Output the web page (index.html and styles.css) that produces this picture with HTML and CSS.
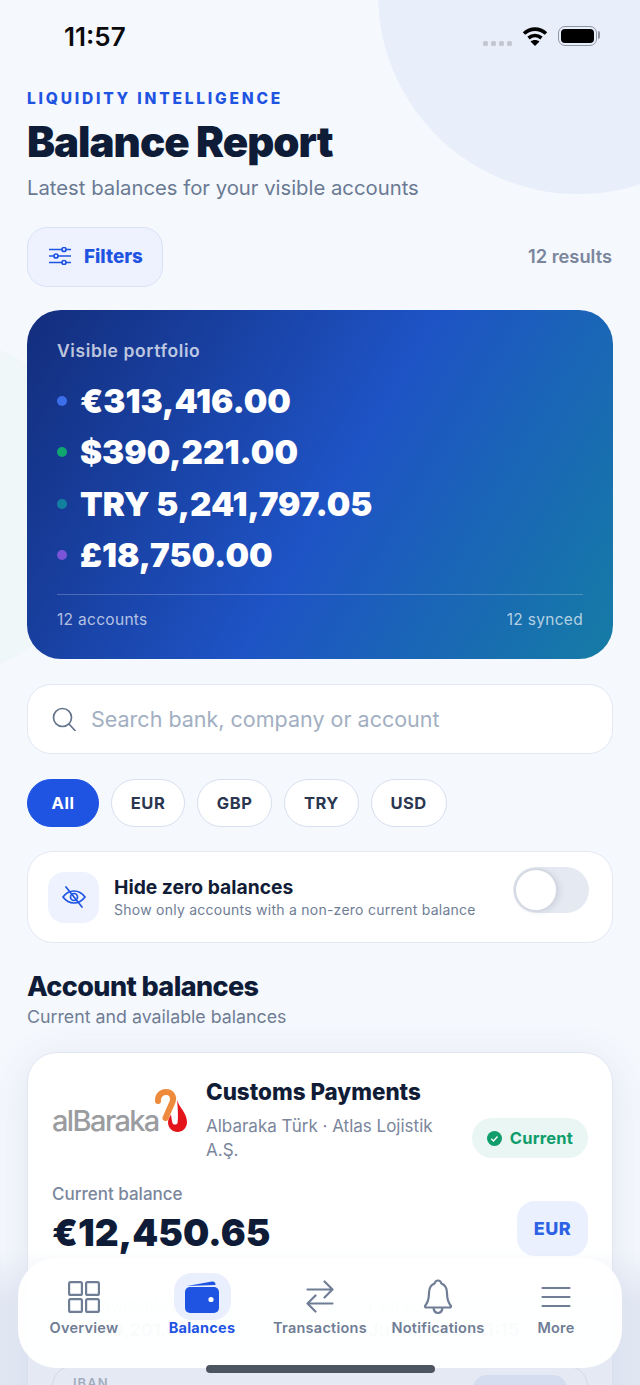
FILE: index.html
```html
<!DOCTYPE html>
<html lang="en">
<head>
<meta charset="UTF-8" />
<meta name="viewport" content="width=device-width, initial-scale=1" />
<title>Balance Report</title>
<link rel="stylesheet" href="styles.css">
</head>
<body>
  <div class="screen">
    <!-- Background shapes -->
    <div class="blob-blue"></div>
    <div class="blob-green"></div>

    <!-- Status bar -->
    <div class="status">
      <span class="time">11:57</span>
      <div class="status-icons">
        <div class="signal"><i></i><i></i><i></i><i></i></div>
        <svg class="wifi" width="26" height="20" viewBox="0 0 26 20" fill="none" stroke="#000" stroke-width="3.600">
          <path d="M2 7.500c6.500-5.800 15.500-5.800 22 0" />
          <path d="M6.500 12c4-3.300 9-3.300 13 0" />
          <path d="M13 20l-4.500-4.500c2.500-2 6.500-2 9 0z" fill="#000" stroke="none" />
        </svg>
        <div class="battery"><div class="battery-fill"></div></div>
      </div>
    </div>

    <div class="content">
      <div class="eyebrow">LIQUIDITY INTELLIGENCE</div>
      <h1>Balance Report</h1>
      <p class="lead">Latest balances for your visible accounts</p>

      <div class="toolbar">
        <button class="filters">
          <svg width="22" height="18" viewBox="0 0 22 18" fill="none" stroke="#1f54e3" stroke-width="1.700">
            <path d="M0 2.500h13M17 2.500h5M0 9h5M9 9h13M0 15.500h13M17 15.500h5" />
            <circle cx="15" cy="2.500" r="2" />
            <circle cx="7" cy="9" r="2" />
            <circle cx="15" cy="15.500" r="2" />
          </svg>
          Filters
        </button>
        <span class="results">12 results</span>
      </div>

      <!-- Portfolio card -->
      <div class="hero">
        <div class="hero-label">Visible portfolio</div>
        <div class="hero-rows">
          <div class="hero-row"><span class="dot dot-eur"></span>€313,416.00</div>
          <div class="hero-row"><span class="dot dot-usd"></span>$390,221.00</div>
          <div class="hero-row"><span class="dot dot-try"></span>TRY 5,241,797.05</div>
          <div class="hero-row"><span class="dot dot-gbp"></span>£18,750.00</div>
        </div>
        <div class="hero-foot">
          <span>12 accounts</span>
          <span>12 synced</span>
        </div>
      </div>

      <div class="search">
        <svg width="24" height="24" viewBox="0 0 24 24" fill="none" stroke="#66758c" stroke-width="1.700" stroke-linecap="round">
          <circle cx="10.500" cy="10.500" r="9" />
          <path d="M17 17l6 6.500" />
        </svg>
        <span class="placeholder">Search bank, company or account</span>
      </div>

      <div class="chips">
        <span class="chip chip-on">All</span>
        <span class="chip">EUR</span>
        <span class="chip">GBP</span>
        <span class="chip">TRY</span>
        <span class="chip">USD</span>
      </div>

      <div class="zero-card">
        <div class="zero-icon">
          <svg width="24" height="22" viewBox="0 0 24 22" fill="none" stroke="#1f54e3" stroke-width="1.700" stroke-linecap="round">
            <path d="M1 11C4 7 7.500 5 12 5S20 7 23 11C20 15 16.500 17 12 17S4 15 1 11z" />
            <circle cx="12" cy="11" r="3.500" />
            <path d="M4 1l16 20" />
          </svg>
        </div>
        <div class="zero-text">
          <div class="zero-title">Hide zero balances</div>
          <div class="zero-sub">Show only accounts with a non-zero current balance</div>
        </div>
        <div class="toggle"><div class="knob"></div></div>
      </div>

      <h2>Account balances</h2>
      <p class="section-sub">Current and available balances</p>

      <!-- Account card -->
      <div class="account">
        <div class="account-top">
          <div class="logo">
            <span class="logo-text">alBaraka</span>
            <svg class="logo-mark" width="34" height="44" viewBox="0 0 34 44" fill="none">
              <path d="M4 12C3.500 6 8 3 12 3c5 0 8.500 4 6.500 10L11.500 29" stroke="#ee8a3c" stroke-width="6" stroke-linecap="round" />
              <path d="M23 11c2 7 10 13 10 22 0 6-4.500 10-9.500 10S14 39 14 33.500c0-3 1.500-5.500 3-8 .5 3 .7 6 1.500 8.500 .7 2 4.500 2 5 0 .8-4 .5-15-.5-23z" fill="#e3151a" />
            </svg>
          </div>
          <div class="account-info">
            <div class="account-name">Customs Payments</div>
            <div class="account-bank">Albaraka Türk · Atlas Lojistik A.Ş.</div>
          </div>
          <div class="pill-current">
            <svg width="15" height="15" viewBox="0 0 15 15">
              <circle cx="7.500" cy="7.500" r="7.500" fill="#0f9d6b" />
              <path d="M4.300 7.700l2.200 2.200 4-4.300" fill="none" stroke="#fff" stroke-width="1.400" />
            </svg>
            Current
          </div>
        </div>

        <div class="balance-row">
          <div>
            <div class="balance-label">Current balance</div>
            <div class="balance-value">€12,450.65</div>
          </div>
          <div class="currency">EUR</div>
        </div>

        <div class="stats">
          <div class="stat">
            <div class="stat-icon"></div>
            <div>
              <div class="stat-label">Available balance</div>
              <div class="stat-value">€9,201.65</div>
            </div>
          </div>
          <div class="stat">
            <div class="stat-icon stat-round"></div>
            <div>
              <div class="stat-label">Last update</div>
              <div class="stat-value">Jul 14, 2025 11:15</div>
            </div>
          </div>
        </div>

        <div class="iban">
          <span class="iban-label">IBAN</span>
          <span class="iban-btn"></span>
        </div>
      </div>
    </div>

    <!-- Fade under the tab bar -->
    <div class="scrim"></div>

    <!-- Tab bar -->
    <div class="tabbar">
      <div class="tab">
        <span class="tab-icon">
          <svg width="32" height="32" viewBox="0 0 32 32" fill="none" stroke="#6f7d95" stroke-width="2.200">
            <rect x="1.100" y="1.100" width="12.800" height="12.800" rx="1.500" />
            <rect x="18.100" y="1.100" width="12.800" height="12.800" rx="1.500" />
            <rect x="1.100" y="18.100" width="12.800" height="12.800" rx="1.500" />
            <rect x="18.100" y="18.100" width="12.800" height="12.800" rx="1.500" />
          </svg>
        </span>
        Overview
      </div>
      <div class="tab tab-on">
        <span class="tab-icon tab-icon-on">
          <svg width="34" height="32" viewBox="0 0 34 32">
            <path d="M2 5L27 .5c2-.3 3.500 .8 3.500 3.500z" fill="#1f54e3" />
            <rect x="0" y="6" width="34" height="26" rx="5" fill="#1f54e3" />
            <circle cx="26" cy="18.500" r="2.600" fill="#fff" />
          </svg>
        </span>
        Balances
      </div>
      <div class="tab">
        <span class="tab-icon">
          <svg width="28" height="33" viewBox="0 0 28 33" fill="none" stroke="#6f7d95" stroke-width="2.200" stroke-linecap="round" stroke-linejoin="round">
            <path d="M1.500 9.500h25M18.500 1.500l8 8-8 8" />
            <path d="M26.500 23.500h-25M9.500 15.500l-8 8 8 8" />
          </svg>
        </span>
        Transactions
      </div>
      <div class="tab">
        <span class="tab-icon">
          <svg width="30" height="36" viewBox="0 0 30 36" fill="none" stroke="#6f7d95" stroke-width="2.200" stroke-linejoin="round">
            <path d="M15 1.500c-2 0-3 1.300-3.400 3C7.500 6 6 9.500 6 14c0 6-1.500 10-4 13 0 1 .5 1.500 1.500 1.500h23c1 0 1.500-.5 1.500-1.500-2.500-3-4-7-4-13 0-4.500-1.500-8-5.600-9.500-.4-1.700-1.400-3-3.400-3z" />
            <path d="M10.500 29c.5 3 2.300 5 4.500 5s4-2 4.500-5" />
          </svg>
        </span>
        Notifications
      </div>
      <div class="tab">
        <span class="tab-icon">
          <svg width="30" height="22" viewBox="0 0 30 22" fill="none" stroke="#6f7d95" stroke-width="2.200" stroke-linecap="round">
            <path d="M1.500 2h27M1.500 11h27M1.500 20h27" />
          </svg>
        </span>
        More
      </div>
    </div>

    <div class="home-bar"></div>
  </div>
</body>
</html>
```

FILE: styles.css
```css
* {
  margin: 0;
  padding: 0;
  box-sizing: border-box;
}

html, body {
  height: 100%;
  overflow: hidden;
  font-family: 'Inter', sans-serif;
  color: #111c36;
  background: #f5f8fd;
}

.screen {
  position: relative;
  width: 640px;
  height: 1385px;
  overflow: hidden;
  background: #f5f8fd;
}

.blob-blue {
  position: absolute;
  top: -206px;
  left: 378px;
  width: 400px;
  height: 400px;
  border-radius: 50%;
  background: #e8eefa;
}

.blob-green {
  position: absolute;
  top: 337px;
  left: -235px;
  width: 340px;
  height: 340px;
  border-radius: 50%;
  background: #eff7f9;
}

/* Status bar */
.status {
  position: relative;
  display: flex;
  align-items: center;
  justify-content: space-between;
  height: 72px;
  padding: 0 43px 0 64px;
}

.time {
  font-size: 26px;
  font-weight: 600;
  color: #0b0b0d;
}

.status-icons {
  display: flex;
  align-items: center;
}

.signal {
  display: flex;
  gap: 3px;
  margin: 14px 10px 0 0;
}

.signal i {
  width: 5px;
  height: 5px;
  border-radius: 1.500px;
  background: #c4c8d0;
}

.wifi {
  margin-right: 10px;
}

.battery {
  position: relative;
  width: 39px;
  height: 20px;
  padding: 2px;
  border: 1.500px solid #8f95a1;
  border-radius: 7px;
}

.battery::after {
  content: '';
  position: absolute;
  top: 4px;
  right: -4px;
  width: 2px;
  height: 8px;
  border-radius: 0 2px 2px 0;
  background: #8f95a1;
}

.battery-fill {
  width: 100%;
  height: 100%;
  border-radius: 4px;
  background: #000;
}

.content {
  position: relative;
  margin-top: 16px;
  padding: 0 27px;
}

.eyebrow {
  padding-top: 1px;
  font-size: 15.500px;
  line-height: 19px;
  font-weight: 800;
  letter-spacing: 2.800px;
  color: #1f54e3;
}

h1 {
  margin-top: 10px;
  font-size: 42px;
  line-height: 48px;
  font-weight: 900;
  letter-spacing: -1px;
  color: #0f1c38;
}

.lead {
  margin-top: 9px;
  font-size: 20.300px;
  line-height: 26px;
  color: #6a7a93;
}

.toolbar {
  display: flex;
  align-items: center;
  justify-content: space-between;
  margin-top: 26px;
}

.filters {
  display: flex;
  align-items: center;
  gap: 13px;
  width: 136px;
  height: 60px;
  padding: 0 0 2px 21px;
  font-family: inherit;
  font-size: 18.800px;
  font-weight: 800;
  color: #1f54e3;
  background: #edf2fe;
  border: 1.500px solid #d9e2f6;
  border-radius: 20px;
}

.results {
  padding: 0 1px 2px 0;
  font-size: 18.300px;
  font-weight: 600;
  color: #7a869c;
}

/* Portfolio card */
.hero {
  height: 349px;
  margin-top: 23px;
  padding: 30px;
  color: #fff;
  background: linear-gradient(120deg, #132d7c 0%, #1e53c5 52%, #157ca5 100%);
  border-radius: 34px;
}

.hero-label {
  font-size: 17.500px;
  line-height: 22px;
  font-weight: 600;
  letter-spacing: 0.600px;
  color: rgba(255, 255, 255, 0.72);
}

.hero-rows {
  margin-top: 13px;
}

.hero-row {
  display: flex;
  align-items: center;
  height: 51.500px;
  font-size: 33.200px;
  font-weight: 900;
}

.dot {
  width: 10px;
  height: 10px;
  margin-right: 13px;
  border-radius: 50%;
}

.dot-eur { background: #3b6ee8; }
.dot-usd { background: #10a66f; }
.dot-try { background: #14809f; }
.dot-gbp { background: #7a55d8; }

.hero-foot {
  display: flex;
  justify-content: space-between;
  margin-top: 13px;
  padding-top: 15px;
  font-size: 15.500px;
  line-height: 20px;
  letter-spacing: 0.300px;
  color: rgba(255, 255, 255, 0.68);
  border-top: 1px solid rgba(255, 255, 255, 0.22);
}

.search {
  display: flex;
  align-items: center;
  gap: 15px;
  height: 70px;
  margin-top: 25px;
  padding-left: 24px;
  background: #fff;
  border: 1.500px solid #e3e8f3;
  border-radius: 24px;
}

.placeholder {
  font-size: 21.500px;
  color: #a2afc2;
}

.chips {
  display: flex;
  gap: 12px;
  margin-top: 25px;
}

.chip {
  display: flex;
  align-items: center;
  justify-content: center;
  height: 48px;
  padding: 0 18.800px;
  font-size: 16.500px;
  font-weight: 700;
  letter-spacing: 0.500px;
  color: #2b3650;
  background: #fff;
  border: 1.500px solid #d8dfee;
  border-radius: 24px;
}

.chip-on {
  width: 72px;
  color: #fff;
  background: #1f54e3;
  border-color: #1f54e3;
}

.zero-card {
  display: flex;
  align-items: center;
  height: 92px;
  margin-top: 24px;
  padding: 0 23px 0 20px;
  background: #fff;
  border: 1.500px solid #e3e8f3;
  border-radius: 26px;
}

.zero-icon {
  display: flex;
  align-items: center;
  justify-content: center;
  width: 51px;
  height: 51px;
  margin-right: 15px;
  background: #edf2fe;
  border-radius: 16px;
}

.zero-text {
  flex: 1;
}

.zero-title {
  font-size: 19.300px;
  line-height: 26px;
  font-weight: 700;
  color: #111c36;
}

.zero-sub {
  font-size: 14px;
  line-height: 20px;
  letter-spacing: 0.250px;
  color: #6f7d95;
}

.toggle {
  align-self: flex-start;
  width: 76px;
  height: 46px;
  margin-top: 14.500px;
  padding: 3px;
  background: #e5e9f1;
  border-radius: 23px;
}

.knob {
  width: 40px;
  height: 40px;
  background: #fff;
  border-radius: 50%;
  box-shadow: 0 0 0 2px #d3d8e2, 3px 1px 6px rgba(90, 100, 125, 0.18);
}

h2 {
  margin-top: 27px;
  font-size: 27px;
  line-height: 34px;
  font-weight: 800;
  letter-spacing: -0.600px;
  color: #0f1c38;
}

.section-sub {
  margin-top: 1px;
  font-size: 17.800px;
  line-height: 24px;
  color: #6f7d95;
}

/* Account card */
.account {
  height: 420px;
  margin-top: 23px;
  padding: 24px;
  background: #fff;
  border: 1.500px solid #e1e6f1;
  border-radius: 30px;
  box-shadow: 0 8px 40px rgba(70, 90, 140, 0.12);
}

.account-top {
  display: flex;
}

.logo {
  display: flex;
  align-items: flex-end;
  flex: none;
  width: 136px;
  height: 58px;
  margin-right: 18px;
}

.logo-text {
  flex: none;
  width: 102px;
  font-size: 29px;
  line-height: 28px;
  font-weight: 500;
  letter-spacing: -1.600px;
  color: #9a9c9f;
}

.logo-mark {
  flex: none;
  margin-bottom: 2px;
}

.account-info {
  flex: 1;
  min-width: 0;
}

.account-name {
  font-size: 22.400px;
  line-height: 30px;
  font-weight: 800;
  color: #111c36;
}

.account-bank {
  margin-top: 7px;
  font-size: 17px;
  line-height: 24px;
  color: #7a869c;
}

.pill-current {
  display: flex;
  align-items: center;
  flex: none;
  align-self: flex-end;
  gap: 8px;
  height: 40px;
  margin: 0 0 4px 12px;
  padding: 0 15px;
  font-size: 16.500px;
  font-weight: 700;
  letter-spacing: 0.200px;
  color: #0f9d6b;
  background: #e9f6f3;
  border-radius: 20px;
}

.balance-row {
  display: flex;
  justify-content: space-between;
  margin-top: 21px;
}

.balance-label {
  font-size: 17px;
  line-height: 22px;
  font-weight: 500;
  color: #7a869c;
}

.balance-value {
  margin-top: 5px;
  font-size: 37px;
  line-height: 46px;
  font-weight: 900;
  color: #0f1c38;
}

.currency {
  display: flex;
  align-items: center;
  justify-content: center;
  width: 71px;
  height: 55px;
  margin-top: 18px;
  font-size: 18px;
  font-weight: 800;
  letter-spacing: 0.500px;
  color: #2e62e4;
  background: #eaf0fd;
  border-radius: 18px;
}

.stats {
  display: flex;
  margin-top: 40px;
}

.stat {
  display: flex;
  gap: 10px;
  width: 276px;
}

.stat-icon {
  width: 38px;
  height: 38px;
  background: #fff;
  border: 1.500px solid #cdd5e5;
  border-radius: 10px;
}

.stat-round {
  border-radius: 50%;
}

.stat-label {
  font-size: 16px;
  line-height: 20px;
  color: #7a869c;
}

.stat-value {
  margin-top: 3px;
  font-size: 18px;
  line-height: 22px;
  font-weight: 700;
  color: #0f1c38;
}

.iban {
  display: flex;
  justify-content: space-between;
  height: 90px;
  margin-top: 25px;
  padding: 8px 20px;
  border: 1.500px solid #ccd4e4;
  border-radius: 20px;
}

.iban-label {
  font-size: 13px;
  line-height: 16px;
  font-weight: 600;
  letter-spacing: 1px;
  color: #4f5d75;
}

.iban-btn {
  width: 94px;
  height: 40px;
  background: #d5e0f7;
  border-radius: 14px;
}

/* Fade under the tab bar */
.scrim {
  position: absolute;
  left: 0;
  right: 0;
  bottom: 0;
  height: 135px;
  background: linear-gradient(to bottom, rgba(212, 220, 236, 0), rgba(212, 220, 236, 0.62) 40%, rgba(212, 220, 236, 0.62));
}

/* Tab bar */
.tabbar {
  position: absolute;
  top: 1258px;
  left: 18px;
  display: flex;
  width: 604px;
  height: 110px;
  padding: 15px 7px 0;
  background: rgba(255, 255, 255, 0.96);
  border-radius: 38px;
}

.tab {
  display: flex;
  flex-direction: column;
  align-items: center;
  width: 118px;
  font-size: 14.500px;
  line-height: 18px;
  font-weight: 600;
  letter-spacing: 0.250px;
  white-space: nowrap;
  color: #6f7d95;
}

.tab-icon {
  display: flex;
  align-items: center;
  justify-content: center;
  width: 57px;
  height: 47px;
  margin-bottom: -1px;
  border-radius: 18px;
}

.tab-icon-on {
  background: #e9effd;
}

.tab-on {
  font-weight: 700;
  color: #1f54e3;
}

.home-bar {
  position: absolute;
  left: 206px;
  top: 1365px;
  width: 229px;
  height: 8px;
  background: #4d5563;
  border-radius: 4px;
}
```
